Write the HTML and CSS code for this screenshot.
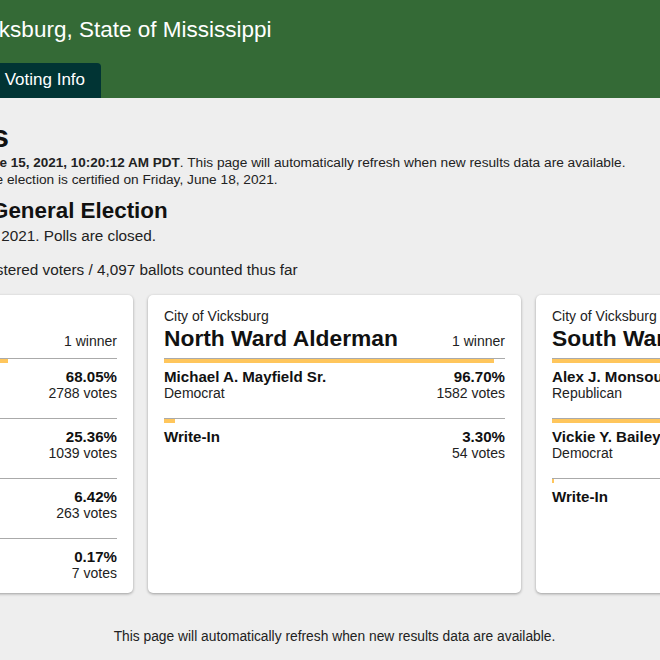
FILE: index.html
```html
<!DOCTYPE html>
<html lang="en">
<head>
<meta charset="utf-8">
<title>Election Results — City of Vicksburg</title>
<link rel="stylesheet" href="styles.css">
</head>
<body>
<header class="site-header">
  <div class="wrap">
    <div class="brand">
      <h1 class="site-title">City of Vicksburg, State of Mississippi</h1>
    </div>
    <nav class="tabs">
      <a class="tab tab-active" href="#results">Results</a>
      <a class="tab" href="#candidates">Candidates</a>
      <a class="tab" href="#info">Voting Info</a>
    </nav>
  </div>
</header>
<main class="wrap main" id="results">
  <h2 class="page-title">Election Results</h2>
  <p class="status">Results were updated on <b class="stamp">Tuesday, June 15, 2021, 10:20:12 AM PDT</b>. This page will automatically refresh when new results data are available.</p>
  <p class="status">These results will stay unofficial until the election is certified on Friday, June 18, 2021.</p>
  <h3 class="election-name">Vicksburg Municipal: General Election</h3>
  <p class="election-date">Election Day was Tuesday, June 8, 2021. Polls are closed.</p>
  <p class="turnout">Turnout: 24.33% of the 16,837 registered voters / 4,097 ballots counted thus far</p>

  <div class="contests">
    <section class="contest">
      <div class="contest-head">
        <div class="jurisdiction">City of Vicksburg</div>
        <div class="contest-title-row">
          <h4 class="contest-title">Mayor</h4>
          <span class="winners">1 winner</span>
        </div>
      </div>
      <div class="choice">
        <div class="bar" style="width:68.05%"></div>
        <div class="choice-body">
          <div><div class="name">George Flaggs Jr.</div><div class="party">Democrat</div></div>
          <div class="result"><div class="pct">68.05%</div><div class="votes">2788 votes</div></div>
        </div>
      </div>
      <div class="choice">
        <div class="bar" style="width:25.36%"></div>
        <div class="choice-body">
          <div><div class="name">Troy Kimble</div><div class="party">Independent</div></div>
          <div class="result"><div class="pct">25.36%</div><div class="votes">1039 votes</div></div>
        </div>
      </div>
      <div class="choice">
        <div class="bar" style="width:6.42%"></div>
        <div class="choice-body">
          <div><div class="name">Eugene Robinson</div><div class="party">Independent</div></div>
          <div class="result"><div class="pct">6.42%</div><div class="votes">263 votes</div></div>
        </div>
      </div>
      <div class="choice">
        <div class="bar" style="width:0.17%"></div>
        <div class="choice-body">
          <div><div class="name">Write-In</div></div>
          <div class="result"><div class="pct">0.17%</div><div class="votes">7 votes</div></div>
        </div>
      </div>
    </section>

    <section class="contest">
      <div class="contest-head">
        <div class="jurisdiction">City of Vicksburg</div>
        <div class="contest-title-row">
          <h4 class="contest-title">North Ward Alderman</h4>
          <span class="winners">1 winner</span>
        </div>
      </div>
      <div class="choice">
        <div class="bar" style="width:96.70%"></div>
        <div class="choice-body">
          <div><div class="name">Michael A. Mayfield Sr.</div><div class="party">Democrat</div></div>
          <div class="result"><div class="pct">96.70%</div><div class="votes">1582 votes</div></div>
        </div>
      </div>
      <div class="choice">
        <div class="bar" style="width:3.30%"></div>
        <div class="choice-body">
          <div><div class="name">Write-In</div></div>
          <div class="result"><div class="pct">3.30%</div><div class="votes">54 votes</div></div>
        </div>
      </div>
    </section>

    <section class="contest">
      <div class="contest-head">
        <div class="jurisdiction">City of Vicksburg</div>
        <div class="contest-title-row">
          <h4 class="contest-title">South Ward Alderman</h4>
          <span class="winners">1 winner</span>
        </div>
      </div>
      <div class="choice">
        <div class="bar" style="width:57.01%"></div>
        <div class="choice-body">
          <div><div class="name">Alex J. Monsour</div><div class="party">Republican</div></div>
          <div class="result"><div class="pct">57.01%</div><div class="votes">1403 votes</div></div>
        </div>
      </div>
      <div class="choice">
        <div class="bar" style="width:42.54%"></div>
        <div class="choice-body">
          <div><div class="name">Vickie Y. Bailey</div><div class="party">Democrat</div></div>
          <div class="result"><div class="pct">42.54%</div><div class="votes">1047 votes</div></div>
        </div>
      </div>
      <div class="choice">
        <div class="bar" style="width:0.45%"></div>
        <div class="choice-body">
          <div><div class="name">Write-In</div></div>
          <div class="result"><div class="pct">0.45%</div><div class="votes">11 votes</div></div>
        </div>
      </div>
    </section>
  </div>

  <p class="footer-note">This page will automatically refresh when new results data are available.</p>
</main>
</body>
</html>
```

FILE: styles.css
```css
* {
  box-sizing: border-box;
}

html,
body {
  margin: 0;
  padding: 0;
}

body {
  width: 660px;
  height: 660px;
  overflow: hidden;
  background: #eeeeee;
  color: #222222;
  font-family: "Liberation Sans", Arial, sans-serif;
}

.wrap {
  width: 1149px;
  margin-left: -240px;
}

/* Header */
.site-header {
  background: #346a36;
  padding-top: 16px;
}

.brand {
  padding-left: 138px;
}

.site-title {
  margin: 0;
  font-size: 22.5px;
  line-height: 27px;
  font-weight: normal;
  color: #ffffff;
}

.tabs {
  display: flex;
  gap: 11px;
  margin-top: 20px;
}

.tab {
  display: block;
  padding: 7px 16px 8px;
  font-size: 17px;
  line-height: 20px;
  color: #ffffff;
  text-decoration: none;
  background: #013434;
  border-radius: 4px 4px 0 0;
}

.tab-active {
  background: #eeeeee;
  color: #222222;
}

/* Main */
.main {
  padding-top: 20px;
}

.page-title {
  margin: 0;
  font-size: 32px;
  line-height: 37px;
  font-weight: bold;
  color: #111111;
}

.status {
  margin: 0;
  font-size: 13.7px;
  line-height: 16.5px;
}

.stamp {
  font-size: 13.5px;
}

.election-name {
  margin: 10px 0 0;
  font-size: 22.4px;
  line-height: 26px;
  font-weight: bold;
  color: #111111;
}

.election-date,
.turnout {
  margin: 3px 0 0;
  font-size: 15.3px;
  line-height: 17px;
}

.turnout {
  margin-top: 17px;
}

/* Contest cards */
.contests {
  display: flex;
  gap: 15px;
  margin-top: 17px;
}

.contest {
  flex: 0 0 373px;
  background: #ffffff;
  border-radius: 5px;
  box-shadow: 0 1px 3px rgba(0, 0, 0, 0.35);
  padding: 13px 16px 11px;
}

.contest-head {
  padding-bottom: 6px;
  border-bottom: 1px solid #aaaaaa;
}

.jurisdiction {
  font-size: 14px;
  line-height: 17px;
}

.contest-title-row {
  display: flex;
  justify-content: space-between;
  align-items: baseline;
}

.contest-title {
  margin: 0;
  font-size: 22.8px;
  line-height: 27px;
  font-weight: bold;
  color: #111111;
  white-space: nowrap;
}

.winners {
  font-size: 14px;
  white-space: nowrap;
}

.choice {
  padding-bottom: 16px;
  border-bottom: 1px solid #aaaaaa;
}

.choice:last-child {
  padding-bottom: 0;
  border-bottom: none;
}

.bar {
  height: 4px;
  background: #ffc65c;
}

.choice-body {
  display: flex;
  justify-content: space-between;
  margin-top: 5px;
}

.name,
.pct {
  font-size: 15.1px;
  line-height: 17px;
  font-weight: bold;
  color: #111111;
}

.party,
.votes {
  font-size: 14px;
  line-height: 17px;
}

.result {
  text-align: right;
}

.footer-note {
  margin: 36px 0 0;
  text-align: center;
  font-size: 13.8px;
  line-height: 16.5px;
}
```
